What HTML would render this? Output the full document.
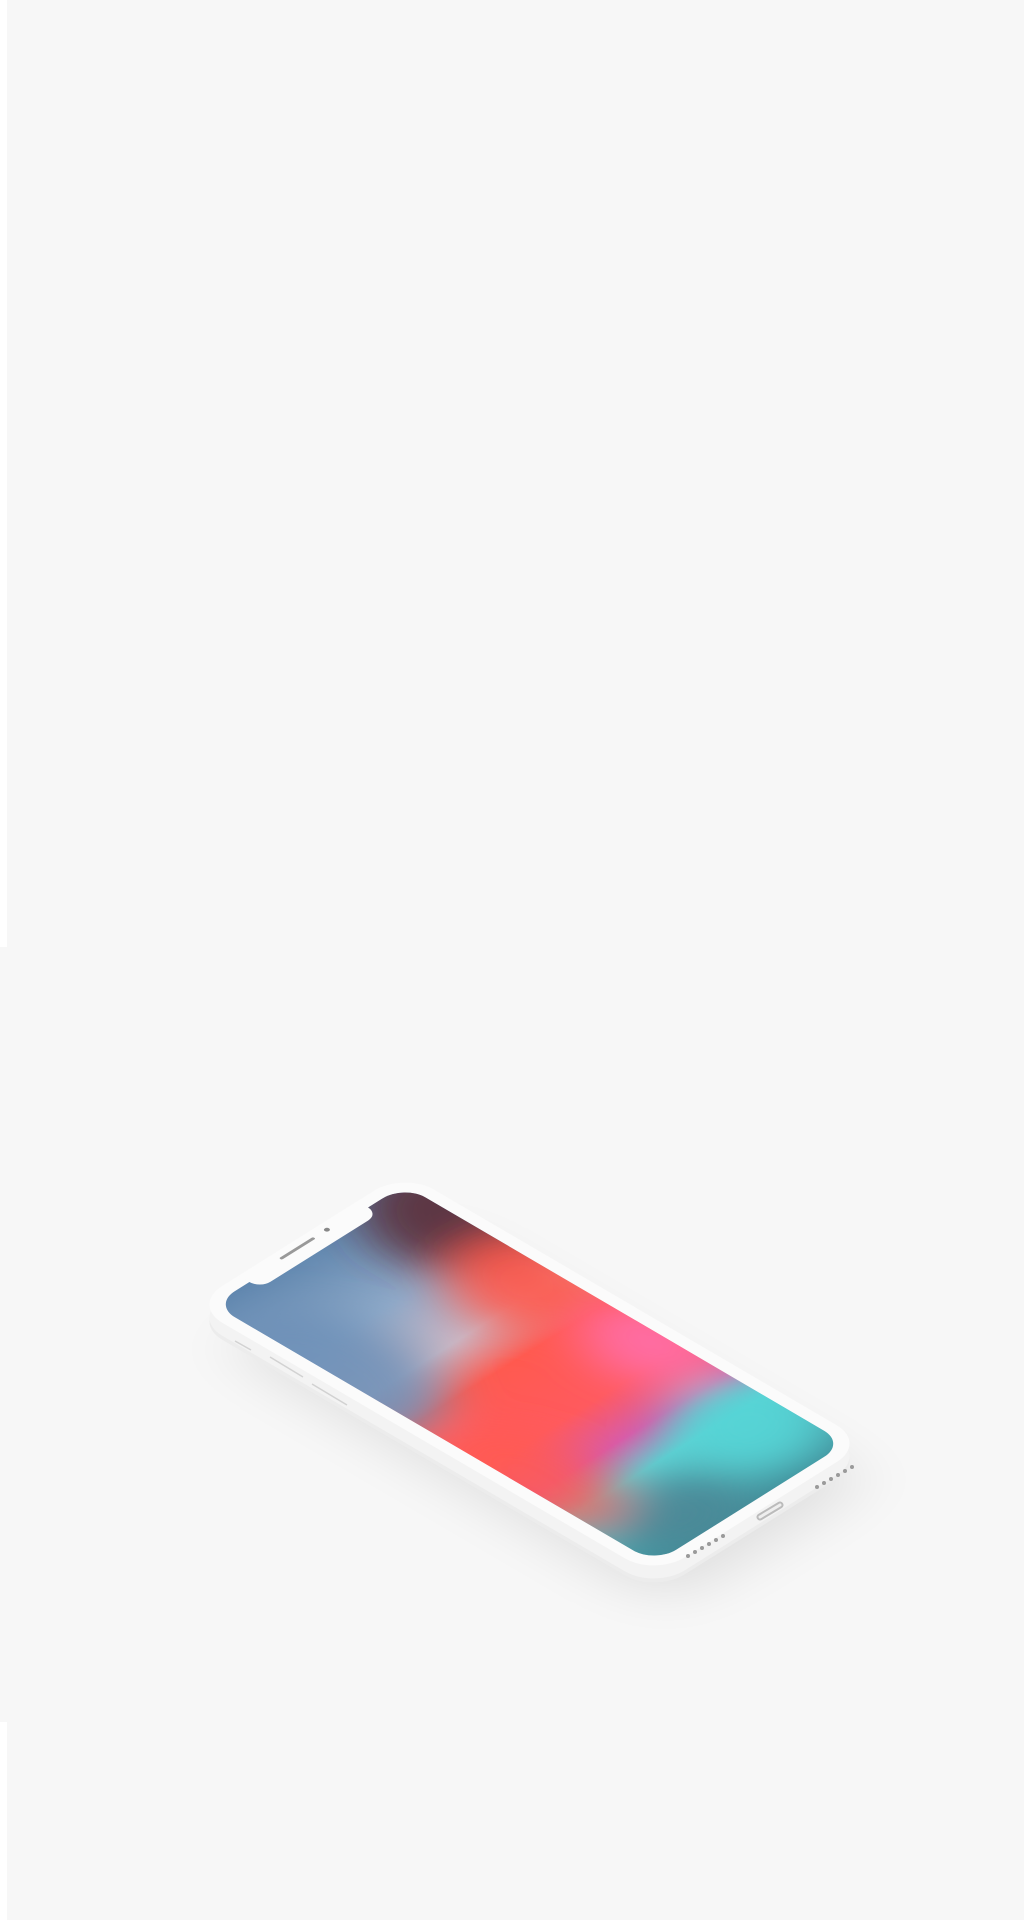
<!DOCTYPE html>
<html><head><meta charset="utf-8"><style>
html,body{margin:0;padding:0;width:1024px;height:1920px;overflow:hidden;background:#f7f7f7}
</style></head><body>
<svg width="1024" height="1920" viewBox="0 0 1024 1920" xmlns="http://www.w3.org/2000/svg" style="position:absolute;left:0;top:0">
<defs>
<filter id="sh" x="-30%" y="-30%" width="160%" height="160%"><feGaussianBlur stdDeviation="12"/></filter>
<filter id="bl" x="-50%" y="-50%" width="200%" height="200%"><feGaussianBlur stdDeviation="9"/></filter>
<linearGradient id="g1" x1="0" y1="0" x2="0" y2="1">
<stop offset="0" stop-color="#5a82ab"/>
<stop offset="0.22" stop-color="#8ea9c8"/>
<stop offset="0.36" stop-color="#c9b7c4"/>
<stop offset="0.46" stop-color="#ff5a50"/>
<stop offset="0.62" stop-color="#ff5a5e"/>
<stop offset="0.72" stop-color="#d85aa8"/>
<stop offset="0.8" stop-color="#5fcfd2"/>
<stop offset="1" stop-color="#3f8a96"/>
</linearGradient>
<clipPath id="sc"><rect x="5" y="5" width="90" height="206" rx="10"/></clipPath>
<clipPath id="bc"><rect x="0" y="0" width="100" height="216" rx="14"/></clipPath>
</defs>
<rect x="0" y="0" width="7" height="947" fill="#ffffff"/>
<rect x="0" y="1722" width="7" height="198" fill="#ffffff"/>
<g transform="matrix(2.12,-1.33,2.1435,1.2546,192,1345)">
<rect x="6" y="10" width="96" height="206" rx="14" fill="#000" opacity="0.09" filter="url(#sh)"/>
</g>
<g transform="matrix(2.12,-1.33,2.1435,1.2546,192,1322)">
<rect x="0" y="0" width="100" height="216" rx="14" fill="#ececec"/>
</g>
<g transform="matrix(2.12,-1.33,2.1435,1.2546,192,1318)">
<rect x="0" y="0" width="100" height="216" rx="14" fill="#f3f3f3"/>
</g>
<g transform="matrix(2.12,-1.33,2.1435,1.2546,192,1305)">
<rect x="0" y="0" width="100" height="216" rx="14" fill="#fbfbfb"/>
<g clip-path="url(#sc)">
<rect x="0" y="0" width="100" height="216" fill="url(#g1)"/>
<g filter="url(#bl)">
<ellipse cx="95" cy="30" rx="30" ry="35" fill="#5b2f36" opacity="0.9"/>
<ellipse cx="85" cy="72" rx="25" ry="28" fill="#ff5a4c" opacity="0.9"/>
<ellipse cx="5" cy="60" rx="28" ry="45" fill="#6c8fb7" opacity="0.85"/>
<ellipse cx="90" cy="125" rx="20" ry="25" fill="#ff6fa8" opacity="0.9"/>
<ellipse cx="10" cy="150" rx="20" ry="35" fill="#ff5a52" opacity="0.8"/>
<ellipse cx="80" cy="180" rx="25" ry="25" fill="#55d5d6" opacity="0.9"/>
<ellipse cx="30" cy="200" rx="25" ry="20" fill="#4a8796" opacity="0.9"/>
</g>
</g>
<g clip-path="url(#bc)">
<rect x="22" y="-6" width="56" height="16" rx="5" fill="#fbfbfb"/>
</g>
<rect x="38" y="3" width="16" height="1.3" rx="0.6" fill="#999"/>
<circle cx="60" cy="3.6" r="1" fill="#888"/>
</g>
<g fill="#9a9a9a">
<circle cx="688" cy="1556" r="2"/><circle cx="695" cy="1552" r="2"/><circle cx="702" cy="1548" r="2"/><circle cx="709" cy="1544" r="2"/><circle cx="716" cy="1540" r="2"/><circle cx="723" cy="1536" r="2"/>
<circle cx="817" cy="1487" r="2"/><circle cx="824" cy="1483" r="2"/><circle cx="831" cy="1479" r="2"/><circle cx="838" cy="1475" r="2"/><circle cx="845" cy="1471" r="2"/><circle cx="852" cy="1467" r="2"/>
</g>
<path d="M760 1517 L780 1505" stroke="#bbb" stroke-width="7" stroke-linecap="round"/>
<path d="M760 1517 L780 1505" stroke="#eee" stroke-width="3" stroke-linecap="round"/>
<g stroke="#d2d2d2" stroke-width="1.5" fill="none">
<path d="M235 1341 L251 1350"/><path d="M270 1357 L303 1377"/><path d="M312 1384 L347 1405"/>
</g>
</svg>
</body></html>
